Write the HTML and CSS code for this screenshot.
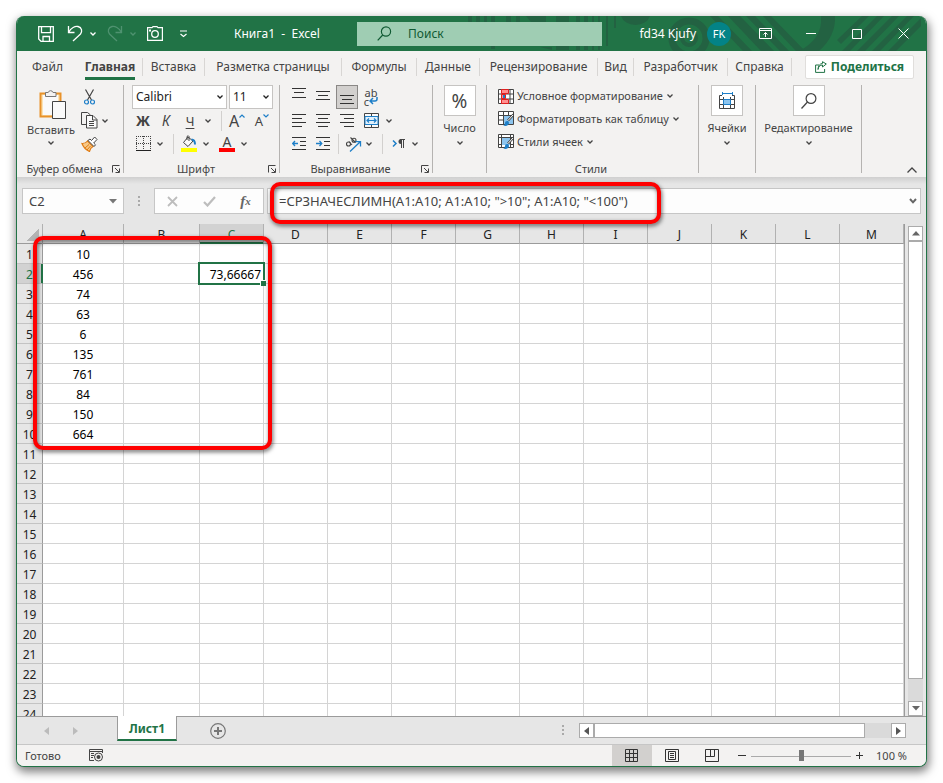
FILE: index.html
```html
<!DOCTYPE html>
<html lang="ru">
<head>
<meta charset="utf-8">
<title>Книга1 - Excel</title>
<link rel="stylesheet" href="styles.css">
</head>
<body>
<svg class="defs" aria-hidden="true">
  <symbol id="chev" viewBox="0 0 8 6"><path d="M1.500 1.500L4 4l2.500-2.500" fill="none" stroke="currentColor" stroke-width="1.300"/></symbol>
  <symbol id="launch" viewBox="0 0 8 8"><path d="M.5 7.500V.5h7M3 3l4 4M7.500 3.500v4h-4" fill="none" stroke="currentColor"/></symbol>
</svg>
<main class="window">
  <header class="titlebar">
    <svg class="pattern" width="460" height="35" viewBox="0 0 460 35" aria-hidden="true">
      <g fill="#236242">
        <path d="M2 0h4v6H2zM10 0h4v6h-4zM18 0h3v6h-3zM25 0h4v33h-4zM40 0h5v6h-5zM50 0h4v6h-4zM60 0h20v6H65zM90 0h13v34H90zM110 0h4v34h-4zM118 0h4v34h-4zM126 0h2v34h-2zM132 0h2v34h-2zM140 0h2v30h-2zM148 0h2v12h-2zM74 31h12v3z"/>
        <path d="M155 0a15 12 0 0 0 29 0zM262 0h12l34 35h-13zM280 0h9l34 35h-9zM297 0h8l34 35h-9zM244 0h8l34 35h-9z"/>
        <path d="M355 0h14q1 20-16 35h-20q24-12 22-35zM396 0h7l-28 28-4-4zM411 0h7l-34 35h-8zM426 0h7l-34 35h-8zM441 0h7l-34 35h-8zM455 2v8l-25 25h-8z"/>
      </g>
      <g fill="none" stroke="#236242"><circle cx="223" cy="22" r="17" stroke-width="7"/><circle cx="223" cy="22" r="7" stroke-width="4"/></g>
    </svg>
    <div class="quick">
      <button class="ic w24" aria-label="Сохранить"><svg width="16" height="16" viewBox="0 0 16 16"><path d="M.7.700h14.600v14.600H3L.7 13zM3.500.7v6h9v-6M5 15v-4.500h6.500V15" fill="none" stroke="#fff" stroke-width="1.300"/></svg></button>
      <button class="ic w24" aria-label="Отменить"><svg width="16" height="17" viewBox="0 0 16 17"><path d="M1.500 1v6.500h6M1.800 7C4 3 8 .8 11 1.500c4 1 4.500 5 2.500 7.500L6 16" fill="none" stroke="#fff" stroke-width="1.300"/></svg></button>
      <button class="ic w12" aria-label="Список отмены"><svg width="8" height="6"><use href="#chev"/></svg></button>
      <button class="ic w24 dim redo" aria-label="Повторить"><svg width="16" height="17" viewBox="0 0 16 17"><path d="M14.500 1v6.500h-6M14.200 7C12 3 8 .8 5 1.500 1 2.500.5 6.500 2.500 9L10 16" fill="none" stroke="currentColor" stroke-width="1.300"/></svg></button>
      <button class="ic w12 dim" aria-label="Список повтора"><svg width="8" height="6"><use href="#chev"/></svg></button>
      <button class="ic w24 camera" aria-label="Камера"><svg width="16" height="15" viewBox="0 0 16 15"><path d="M.6 1.600h4.400L6 .6h4l1 1h4.400v12.700H.6z" fill="none" stroke="#fff" stroke-width="1.200"/><path d="M2 3.500h2v2H2z" fill="#fff"/><circle cx="8" cy="8" r="3.300" fill="none" stroke="#fff" stroke-width="1.300"/></svg></button>
      <button class="ic w32" aria-label="Настройка панели"><svg width="9" height="8" viewBox="0 0 9 8"><path d="M1 1h7M1.500 4l3 2.500 3-2.500" fill="none" stroke="#fff" stroke-width="1.200"/></svg></button>
      <span class="doc">Книга1 &nbsp;- &nbsp;Excel</span>
    </div>
    <label class="search"><svg width="15" height="15" viewBox="0 0 15 15"><circle cx="9" cy="5.500" r="4.600" fill="none" stroke="#105a33" stroke-width="1.200"/><path d="M5.700 9L.7 14.300" stroke="#105a33" stroke-width="1.200"/></svg><input type="text" placeholder="Поиск" aria-label="Поиск"></label>
    <div class="winctl">
      <span class="user">fd34 Kjufy</span><span class="avatar">FK</span>
      <button class="ic" aria-label="Параметры ленты"><svg width="13" height="11" viewBox="0 0 13 11"><path d="M.5.500h12v10H.5zM.5 2.500h12M6.500 9V4.500M4.500 6.500l2-2 2 2" fill="none" stroke="#fff"/></svg></button>
      <button class="ic" aria-label="Свернуть"><svg width="10" height="11"><path d="M0 5.500h10" stroke="#fff"/></svg></button>
      <button class="ic" aria-label="Развернуть"><svg width="10" height="10"><path d="M.5.500h9v9h-9z" fill="none" stroke="#fff"/></svg></button>
      <button class="ic" aria-label="Закрыть"><svg width="11" height="11"><path d="M.5.500l10 10M10.500.500l-10 10" stroke="#fff"/></svg></button>
    </div>
  </header>

  <nav class="tabs">
    <a href="#" class="plain">Файл</a><a href="#" class="active"><span>Главная</span></a><a href="#">Вставка</a><a href="#">Разметка страницы</a><a href="#">Формулы</a><a href="#">Данные</a><a href="#">Рецензирование</a><a href="#">Вид</a><a href="#">Разработчик</a><a href="#">Справка</a>
    <button class="share"><svg width="12" height="12" viewBox="0 0 12 12"><path d="M4 4H.6v7.400h9V8M3 8.500C3.500 5.500 5 4 7.500 4V6L11.300 3 7.500.7v1.700C4.500 2.800 3.200 5 3 8.500z" fill="none" stroke="#217346"/></svg>Поделиться</button>
  </nav>

  <section class="ribbon">
    <div class="group clip">
      <div class="body split">
        <button class="paste"><svg width="32" height="31" viewBox="-4 0 32 31"><path d="M1.500 4.500h20v23h-20z" fill="#fbe3b5" stroke="#e8922a" stroke-width="2"/><path d="M4 6h15v20H4z" fill="#fafafa"/><path d="M6.500 7.500v-4h2.700a2.500 2.500 0 0 1 4.800 0h3v4z" fill="#f3f2f1" stroke="#777"/><path d="M13.500 12.500h13v17h-13z" fill="#fafafa" stroke="#444"/></svg><span>Вставить</span><svg width="8" height="6"><use href="#chev"/></svg></button>
        <div class="rows">
          <div class="row"><button class="ic w20" aria-label="Вырезать"><svg width="11" height="16" viewBox="0 0 11 16"><path d="M1.500.500L7.500 11M9.500.500L3.500 11" stroke="#444" stroke-width="1.200"/><circle cx="2.500" cy="13" r="2" fill="none" stroke="#1e7fc8" stroke-width="1.200"/><circle cx="8.500" cy="13" r="2" fill="none" stroke="#1e7fc8" stroke-width="1.200"/></svg></button></div>
          <div class="row"><button class="ic w20" aria-label="Копировать"><svg width="17" height="17" viewBox="0 0 17 17"><path d="M5.500 12.500h-5V.500h6l3 2.500" fill="none" stroke="#444"/><path d="M5.500 3.500h6.500l4 4v8.500H5.500zM11.500 3.500v4.500h4.500M8 9.500h5M8 11.500h5M8 13.500h5" fill="#fafafa" stroke="#444"/></svg></button><button class="ic w12" aria-label="Ещё"><svg width="8" height="6"><use href="#chev"/></svg></button></div>
          <div class="row"><button class="ic w20" aria-label="Формат по образцу"><svg width="17" height="16" viewBox="0 0 17 16"><path d="M1 7.500c3 .2 4-.5 5.500-2.500l5.500 5.500c-2 1-3 2.500-3.500 5C5 14 2.500 11.500 1 7.500z" fill="#f8c987" stroke="#e07b12" stroke-width="1.200"/><path d="M4 12l4-3.500M6 14l3.500-4" stroke="#e07b12"/><path d="M7 4.500l6 6 1.500-1.700-1.800-1.800L16 3.500 13.700 1 10.500 4.500 9 3z" fill="#fff" stroke="#444"/></svg></button></div>
        </div>
      </div>
      <div class="caption"><span>Буфер обмена</span><button class="ic" aria-label="Параметры буфера"><svg width="8" height="8"><use href="#launch"/></svg></button></div>
    </div>

    <div class="group font">
      <div class="body rows">
        <div class="row"><label class="combo"><input type="text" value="Calibri" aria-label="Шрифт"><svg width="8" height="6"><use href="#chev"/></svg></label><label class="combo size"><input type="text" value="11" aria-label="Размер"><svg width="8" height="6"><use href="#chev"/></svg></label></div>
        <div class="row"><button class="ic w22 bold">Ж</button><button class="ic w24 ital">К</button><button class="ic w24 under">Ч</button><button class="ic w12" aria-label="Подчёркивание"><svg width="8" height="6"><use href="#chev"/></svg></button><i class="sep"></i><button class="ic w30 biga" aria-label="Увеличить шрифт">A<svg width="6" height="4"><path d="M.5 3.500L3 1l2.500 2.500" fill="none" stroke="#1e7fc8" stroke-width="1.200"/></svg></button><button class="ic w20 smalla" aria-label="Уменьшить шрифт">A<svg width="6" height="4"><path d="M.5.500L3 3 5.500.5" fill="none" stroke="#1e7fc8" stroke-width="1.200"/></svg></button></div>
        <div class="row"><button class="ic w22" aria-label="Границы"><svg width="15" height="15" viewBox="0 0 15 15"><path d="M0 .5h15M0 7.500h15M.5 0v13M7.500 0v13M14.500 0v13" stroke="#444" stroke-dasharray="1 1"/><path d="M0 14.500h15" stroke="#222"/></svg></button><button class="ic w12" aria-label="Ещё"><svg width="8" height="6"><use href="#chev"/></svg></button><i class="sep"></i><button class="ic w22 gap" aria-label="Цвет заливки"><svg width="16" height="17" viewBox="0 0 16 17"><path d="M7 2L2.500 7.500l4.500 4 5-5.500zM6 5V1.500q1.500-1.500 2 0V6" fill="#fafafa" stroke="#444"/><path d="M10.500 4.500q3.500 0 3.500 5" fill="none" stroke="#1e7fc8" stroke-width="2"/><path d="M0 13h16v4H0z" fill="#ff0"/></svg></button><button class="ic w12" aria-label="Ещё"><svg width="8" height="6"><use href="#chev"/></svg></button><button class="ic w22 gap fontcolor" aria-label="Цвет текста"><span>A</span></button><button class="ic w12" aria-label="Ещё"><svg width="8" height="6"><use href="#chev"/></svg></button></div>
      </div>
      <div class="caption"><span>Шрифт</span><button class="ic" aria-label="Параметры шрифта"><svg width="8" height="8"><use href="#launch"/></svg></button></div>
    </div>

    <div class="group align">
      <div class="body rows">
        <div class="row"><button class="ic w24" aria-label="По верхнему краю"><svg width="14" height="20"><path d="M0 1.500h14M2 5.500h10M0 10.500h14" stroke="#333"/></svg></button><button class="ic w24" aria-label="По середине"><svg width="14" height="20"><path d="M0 4.500h14M2 8.500h10M0 12.500h14" stroke="#333"/></svg></button><button class="ic w24 pressed" aria-label="По нижнему краю"><svg width="14" height="20"><path d="M0 8.500h14M2 12.500h10M0 16.500h14" stroke="#333"/></svg></button><button class="ic w24 wrap" aria-label="Перенести текст"><span>ab</span><span>c<svg width="9" height="8" viewBox="0 0 9 8"><path d="M8 0v2q0 2-2 2H1M4 1L1 4l3 3" fill="none" stroke="#1e7fc8" stroke-width="1.500"/></svg></span></button></div>
        <div class="row"><button class="ic w24" aria-label="По левому краю"><svg width="14" height="13"><path d="M0 .5h14M0 4.500h10M0 8.500h14M0 12.500h10" stroke="#333"/></svg></button><button class="ic w24" aria-label="По центру"><svg width="14" height="13"><path d="M0 .5h14M2 4.500h10M0 8.500h14M2 12.500h10" stroke="#333"/></svg></button><button class="ic w24" aria-label="По правому краю"><svg width="14" height="13"><path d="M0 .5h14M4 4.500h10M0 8.500h14M4 12.500h10" stroke="#333"/></svg></button><button class="ic w24" aria-label="Объединить"><svg width="15" height="15"><path d="M.5.500h14v14H.5zM7.500 0v3M7.500 12v3" fill="#fafafa" stroke="#444"/><path d="M1 3.500h13v8H1z" fill="#e2f0fb" stroke="#1e7fc8"/><path d="M3 7.500h9M5 5.500l-2 2 2 2M10 5.500l2 2-2 2" fill="none" stroke="#1e7fc8" stroke-width="1.200"/></svg></button><button class="ic w12" aria-label="Ещё"><svg width="8" height="6"><use href="#chev"/></svg></button></div>
        <div class="row"><button class="ic w24" aria-label="Уменьшить отступ"><svg width="14" height="13"><path d="M0 .5h14M8 4.500h6M8 8.500h6M0 12.500h14" stroke="#333"/><path d="M6 6.500H1M3 4L.7 6.500 3 9" fill="none" stroke="#1e7fc8" stroke-width="1.300"/></svg></button><button class="ic w24" aria-label="Увеличить отступ"><svg width="14" height="13"><path d="M0 .5h14M8 4.500h6M8 8.500h6M0 12.500h14" stroke="#333"/><path d="M0 6.500h5M3.500 4l2.300 2.500L3.500 9" fill="none" stroke="#1e7fc8" stroke-width="1.300"/></svg></button><i class="sep near"></i><button class="ic w20 gap" aria-label="Ориентация"><svg width="17" height="16" viewBox="0 0 17 16"><g fill="none" stroke="#444" stroke-width="1.100"><circle cx="3.500" cy="8" r="2"/><path d="M4 5.500l3 3.500M5.500 1.500l5 5"/><circle cx="9" cy="4.200" r="2"/></g><path d="M5 15.500L15 6M10.500 5.700H15.500V10.500" fill="none" stroke="#1e7fc8" stroke-width="1.300"/></svg></button><button class="ic w12" aria-label="Ещё"><svg width="8" height="6"><use href="#chev"/></svg></button><i class="sep"></i><button class="ic w22 gap" aria-label="Направление текста"><svg width="13" height="10" viewBox="0 0 13 10"><path d="M1 1.500l3 3-3 3" fill="none" stroke="#1e7fc8" stroke-width="1.500"/><path d="M9 0a2.500 2.500 0 0 0 0 5z" fill="#444"/><path d="M8 .5h5M9.500 0v9M11.500 0v9" stroke="#444"/></svg></button><button class="ic w12" aria-label="Ещё"><svg width="8" height="6"><use href="#chev"/></svg></button></div>
      </div>
      <div class="caption"><span>Выравнивание</span><button class="ic" aria-label="Параметры выравнивания"><svg width="8" height="8"><use href="#launch"/></svg></button></div>
    </div>

    <div class="group number"><button class="tall"><span class="tile">%</span><span>Число</span><svg width="8" height="6"><use href="#chev"/></svg></button></div>

    <div class="group styles">
      <div class="body rows">
        <button class="row item"><svg width="16" height="15" viewBox="0 0 16 15"><path d="M.5.500h15v14H.5zM.5 5h15M.5 10h15M4 .5v14M12 .5v14" fill="#fff" stroke="#444"/><path d="M3.500.500h7v4h-7zM3.500 5.500h4v4h-4zM3.500 10.500h7v4h-7z" fill="#ff8f8f" stroke="#e02020"/><path d="M5 6h2v3H5z" fill="#1e7fc8"/></svg><span>Условное форматирование</span><svg width="8" height="6"><use href="#chev"/></svg></button>
        <button class="row item"><svg width="16" height="15" viewBox="0 0 16 15"><path d="M.5.500h15v13H.5zM.5 4.500h15M.5 9h15M5.500.5v13M10.500.5v13" fill="#fff" stroke="#444"/><path d="M6 5h9v8H6z" fill="#8cc4ee"/><path d="M15.500 3.500L10 9.500" stroke="#444" stroke-width="2.500"/><path d="M15 4L10 9.500" stroke="#fff"/><path d="M5 14.500q2 0 2-2.500t3-2q2 2 0 4-2 1.500-5 .5z" fill="#1e7fc8"/></svg><span>Форматировать как таблицу</span><svg width="8" height="6"><use href="#chev"/></svg></button>
        <button class="row item"><svg width="16" height="15" viewBox="0 0 16 15"><path d="M.5.500h15v13H.5zM.5 3.500h15M.5 10.500h15M3.500.5v13M12.500.5v13" fill="#fff" stroke="#444"/><path d="M4 4h8v7H4z" fill="#8cc4ee"/><path d="M15.500 3.500L10 9.500" stroke="#444" stroke-width="2.500"/><path d="M15 4L10 9.500" stroke="#fff"/><path d="M5 14.500q2 0 2-2.500t3-2q2 2 0 4-2 1.500-5 .5z" fill="#1e7fc8"/></svg><span>Стили ячеек</span><svg width="8" height="6"><use href="#chev"/></svg></button>
      </div>
      <div class="caption"><span>Стили</span></div>
    </div>

    <div class="group cells"><button class="tall"><span class="tile"><svg width="17" height="17" viewBox="0 0 17 17"><path d="M4 1.500h9M3.500 0v3M13.500 0v3" stroke="#1e7fc8"/><path d="M3 3.500H.5v13h15V3.500H13M.5 7.500h15M.5 12.500h15M4.500 5v11M11.500 5v11" fill="none" stroke="#444"/><path d="M4.500 7.500h7v5h-7z" fill="#8cc4ee" stroke="#1e7fc8"/></svg></span><span>Ячейки</span><svg width="8" height="6"><use href="#chev"/></svg></button></div>
    <div class="group edit"><button class="tall"><span class="tile"><svg width="16" height="16" viewBox="0 0 16 16"><circle cx="10" cy="5.500" r="4.900" fill="none" stroke="#444" stroke-width="1.200"/><path d="M6.500 9L.5 15.500" stroke="#444" stroke-width="1.300"/></svg></span><span>Редактирование</span><svg width="8" height="6"><use href="#chev"/></svg></button></div>
    <button class="ic collapse" aria-label="Свернуть ленту"><svg width="10" height="6"><path d="M.5 5.500L5 1l4.500 4.500" fill="none" stroke="#444" stroke-width="1.300"/></svg></button>
  </section>

  <section class="formulabar">
    <label class="namebox"><input type="text" value="C2" aria-label="Имя"><svg width="8" height="5"><path d="M0 0h8L4 4.500z" fill="#777"/></svg></label>
    <svg class="grip" width="2" height="11"><path d="M0 0h2v2H0zM0 4h2v2H0zM0 8h2v2H0z" fill="#aaa"/></svg>
    <div class="fx"><button class="ic" aria-label="Отмена"><svg width="11" height="11"><path d="M1 1l9 9M10 1l-9 9" stroke="#bdbdbd" stroke-width="1.800"/></svg></button><button class="ic" aria-label="Ввод"><svg width="13" height="11"><path d="M1 6l3.500 3.500L12 1" fill="none" stroke="#bdbdbd" stroke-width="2.200"/></svg></button><button class="ic fn">f<small>x</small></button></div>
    <label class="formula"><input type="text" value="=СРЗНАЧЕСЛИМН(A1:A10; A1:A10; &quot;&gt;10&quot;; A1:A10; &quot;&lt;100&quot;)" aria-label="Формула"><svg width="8" height="6" viewBox="0 0 8 6"><path d="M1 1l3 3.300L7 1" fill="none" stroke="#666" stroke-width="2"/></svg></label>
    <i class="mark mark-formula"></i>
  </section>

  <section class="sheet">
    <div class="gridwrap">
      <table>
        <colgroup><col class="cn"><col class="ca"><col class="cb"><col class="cc"><col><col><col><col><col><col><col><col><col><col></colgroup>
        <thead><tr><th class="corner"></th><th>A</th><th>B</th><th class="sel">C</th><th>D</th><th>E</th><th>F</th><th>G</th><th>H</th><th>I</th><th>J</th><th>K</th><th>L</th><th>M</th></tr></thead>
        <tbody id="cells"></tbody>
      </table>
    </div>
    <div class="vscroll"><button class="ic arrow" aria-label="Вверх"><svg width="8" height="5"><path d="M0 4.500L4 0l4 4.500z" fill="#666"/></svg></button><div class="thumb"></div><div class="track"></div><button class="ic arrow" aria-label="Вниз"><svg width="8" height="5"><path d="M0 0h8L4 4.500z" fill="#666"/></svg></button></div>
    <i class="mark mark-cells"></i>
  </section>

  <section class="sheetbar">
    <button class="ic nav" aria-label="Предыдущий лист"><svg width="5" height="8"><path d="M5 0v8L0 4z" fill="#bbb"/></svg></button><button class="ic nav" aria-label="Следующий лист"><svg width="5" height="8"><path d="M0 0v8l5-4z" fill="#bbb"/></svg></button>
    <a href="#" class="sheettab">Лист1</a>
    <button class="ic add" aria-label="Новый лист"><svg width="16" height="16"><circle cx="8" cy="8" r="7.300" fill="none" stroke="#777" stroke-width="1.200"/><path d="M4 8h8M8 4v8" stroke="#777" stroke-width="2"/></svg></button>
    <svg class="grip" width="2" height="11"><path d="M0 0h2v2H0zM0 4h2v2H0zM0 8h2v2H0z" fill="#aaa"/></svg>
    <div class="hscroll"><button class="ic arrow" aria-label="Влево"><svg width="5" height="8"><path d="M5 0v8L0 4z" fill="#555"/></svg></button><div class="thumb"></div><div class="track"></div><button class="ic arrow" aria-label="Вправо"><svg width="5" height="8"><path d="M0 0v8l5-4z" fill="#555"/></svg></button></div>
  </section>

  <footer class="status">
    <span>Готово</span>
    <button class="ic macro" aria-label="Запись макроса"><svg width="15" height="13" viewBox="0 0 15 13"><path d="M5 11.500H.5V.500h13V4M0 2.500h14M2 4.500h3M2 6.500h3M2 8.500h2" fill="none" stroke="#444"/><circle cx="9.500" cy="8" r="4" fill="#f3f2f1" stroke="#444"/><circle cx="9.500" cy="8" r="2" fill="#444"/></svg></button>
    <div class="views">
      <button class="ic on" aria-label="Обычный"><svg width="14" height="14"><path d="M.5.500h12v12H.5zM.5 4.500h12M.5 8.500h12M4.500.5v12M8.500.5v12" fill="none" stroke="#333"/></svg></button><button class="ic" aria-label="Разметка"><svg width="14" height="14"><path d="M.5.500h13v12H.5zM3.500 2.500h7v8h-7zM5 4.500h4M5 6.500h4M5 8.500h4" fill="none" stroke="#333"/></svg></button><button class="ic" aria-label="Страничный"><svg width="14" height="14"><path d="M.5.500h13v12H.5zM.5 7.500h9V.500M5.500.500v7" fill="none" stroke="#333"/></svg></button>
    </div>
    <button class="ic zoomb" aria-label="Уменьшить"><svg width="8" height="8"><path d="M0 3.500h8" stroke="#333"/></svg></button>
    <input class="zoom" type="range" min="0" max="100" value="50" aria-label="Масштаб">
    <button class="ic zoomb" aria-label="Увеличить"><svg width="8" height="8"><path d="M0 3.500h7M3.500 0v7" stroke="#333"/></svg></button>
    <span class="pct">100 %</span>
  </footer>
</main>
<script src="grid.js"></script>
</body>
</html>
```
FILE: grid.js
```js
const values = ["10", "456", "74", "63", "6", "135", "761", "84", "150", "664"];
const body = document.getElementById("cells");

for (let r = 1; r <= 24; r++) {
  const row = document.createElement("tr");
  const head = document.createElement("th");
  head.textContent = r;
  if (r === 2) head.className = "sel";
  row.append(head);
  for (let c = 0; c < 13; c++) {
    const cell = document.createElement("td");
    if (c === 0 && values[r - 1]) cell.textContent = values[r - 1];
    if (r === 2 && c === 2) {
      cell.textContent = "73,66667";
      cell.className = "current";
    }
    row.append(cell);
  }
  body.append(row);
}
```
FILE: styles.css
```css
* { box-sizing: border-box; }
body {
  margin: 0;
  padding: 16px;
  height: 100vh;
  background: #fff;
  color: #444;
  font: 12px/16px "Noto Sans", sans-serif;
  overflow: hidden;
}
button, input { font: inherit; color: inherit; background: none; border: 0; padding: 0; margin: 0; outline: 0; min-width: 0; }
a { color: inherit; text-decoration: none; }
svg { display: block; flex: none; }
.defs { position: absolute; width: 0; height: 0; }

.window {
  display: flex;
  flex-direction: column;
  height: 100%;
  border: 1px solid #217346;
  border-top: 0;
  border-radius: 8px;
  overflow: hidden;
  background: #e6e6e6;
  box-shadow: 1px 4px 10px 1px rgba(0, 0, 0, .5);
}

.ic { display: flex; align-items: center; justify-content: center; flex: none; }
.w12 { width: 12px; }
.w20 { width: 20px; }
.w22 { width: 22px; }
.w24 { width: 24px; }
.w30 { width: 30px; }
.w32 { width: 32px; }

/* title bar */
.titlebar {
  position: relative;
  display: grid;
  grid-template-columns: 340px minmax(0, 245px) 1fr;
  align-items: center;
  height: 35px;
  flex: none;
  background: #217346;
  color: #fff;
}
.pattern { position: absolute; right: 0; top: 0; }
.quick { display: flex; align-items: center; padding-left: 17px; }
.quick .w24:nth-child(2) { margin-left: 5px; }
.quick .redo { margin-left: 4px; }
.quick .camera { margin-left: 4px; }
.doc { margin-left: 35px; white-space: nowrap; }
.dim { color: #4f9270; }
.search {
  position: relative;
  display: flex;
  align-items: center;
  gap: 16px;
  height: 24px;
  padding-left: 20px;
  background: #9fcdb3;
}
.search input { flex: 1; }
.search input::placeholder { color: #105a33; opacity: 1; }
.winctl { position: relative; display: flex; align-items: center; justify-content: flex-end; }
.winctl .ic { width: 46px; height: 34px; }
.avatar {
  width: 24px;
  height: 24px;
  margin: 0 11px;
  border-radius: 50%;
  background: #038387;
  font-size: 11px;
  line-height: 24px;
  text-align: center;
}

/* ribbon tabs */
.tabs {
  display: grid;
  grid-template-columns: 61px 65px 62px 137px 75px 63px 118px 36px 94px 64px 1fr;
  align-items: center;
  height: 31px;
  flex: none;
  background: #f3f2f1;
}
.tabs a { height: 18px; border-right: 1px solid #d8d6d4; text-align: center; line-height: 18px; white-space: nowrap; }
.tabs .plain { border: 0; }
.tabs .active { font-weight: 700; }
.active span { display: inline-block; height: 22px; border-bottom: 3px solid #217346; }
.share {
  display: flex;
  align-items: center;
  justify-content: center;
  gap: 4px;
  justify-self: end;
  width: 109px;
  height: 24px;
  margin-right: 12px;
  border: 1px solid #e0dedc;
  border-radius: 2px;
  background: #fff;
  color: #217346;
  font-weight: 700;
}

/* ribbon */
.ribbon { display: flex; flex: none; height: 95px; padding-top: 3px; background: #f3f2f1; font-size: 11px; }
.group { display: flex; flex-direction: column; height: 88px; border-right: 1px solid #b5b3b1; flex: none; }
.clip { width: 107px; }
.font { width: 156px; }
.align { width: 153px; }
.number { width: 54px; }
.styles { width: 212px; }
.cells { width: 57px; }
.edit { width: 106px; }
.body { height: 70px; flex: none; }
.split { display: flex; padding-left: 8px; }
.rows { display: flex; flex-direction: column; }
.row { display: flex; align-items: center; height: 23px; }
.font .rows { padding-left: 8px; }
.align .rows { padding-left: 7px; }
.row:first-child { height: 24px; }
.paste { display: flex; flex-direction: column; align-items: center; width: 52px; padding-top: 4px; line-height: 20px; }
.caption { display: flex; align-items: center; flex: none; margin-top: 9px; height: 10px; line-height: 10px; padding-right: 3px; }
.caption span { flex: 1; text-align: center; white-space: nowrap; }
.clip .split .rows { padding-left: 2px; }
.combo { display: flex; align-items: center; width: 95px; height: 24px; padding: 0 2px 0 3px; border: 1px solid #c6c4c2; background: #fff; color: #222; font-size: 12px; }
.combo input { flex: 1; }
.combo.size { width: 44px; margin-left: 2px; }
.sep { width: 1px; height: 20px; margin-left: 7px; background: #d2d0ce; }
.sep.near { margin-left: 3px; }
.gap { margin-left: 4px; }
.bold { font-weight: 700; font-size: 14px; }
.ital { font-style: italic; font-size: 14px; }
.under { text-decoration: underline; text-underline-offset: 2px; font-size: 13px; }
.biga { font-size: 16px; align-items: flex-start; }
.smalla { font-size: 13px; align-items: flex-start; }
.biga svg, .smalla svg { margin-top: 1px; }
.fontcolor span { width: 16px; height: 17px; border-bottom: 4px solid #f00; font-size: 14px; line-height: 13px; }
.pressed { width: 22px; height: 24px; margin: 0 1px; border: 1px solid #8a8886; background: #d2d0ce; }
.wrap { flex-direction: column; font-size: 11px; line-height: 9px; }
.wrap span { display: flex; }
.tall { display: flex; flex-direction: column; align-items: center; line-height: 24px; }
.tile { display: flex; align-items: center; justify-content: center; width: 32px; height: 31px; border: 1px solid #c6c4c2; background: #fff; font-size: 19px; }
.item { gap: 3px; padding-left: 11px; white-space: nowrap; }
.item:first-child { height: 22px; }
.collapse { margin-left: auto; margin-right: 9px; align-self: flex-end; height: 14px; }

/* formula bar */
.formulabar {
  position: relative;
  display: flex;
  align-items: center;
  flex: none;
  height: 47px;
  padding: 1px 5px 0;
  background: linear-gradient(#cfcfcf, #e6e6e6 7px);
  font-size: 13px;
}
.namebox, .fx, .formula { display: flex; align-items: center; height: 26px; border: 1px solid #c6c6c6; background: #fdfdfd; }
.namebox { width: 102px; padding: 0 6px; }
.namebox input, .formula input { flex: 1; }
.formulabar .grip { margin: 0 14px; }
.fx { width: 110px; justify-content: space-around; }
.fn { font: italic 700 15px/16px "Liberation Serif", serif; color: #666; }
.fn small { font-size: 11px; }
.formula { flex: 1; margin-left: 3px; padding: 0 3px 0 11px; }

/* highlight frames drawn over the page */
.mark { position: absolute; z-index: 2; border: 4px solid #f00; border-radius: 10px; filter: drop-shadow(1px 2px 2px rgba(0, 0, 0, .6)); pointer-events: none; }
.mark-formula { left: 253px; top: 5px; width: 391px; height: 42px; }
.mark-cells { left: 16px; top: 12px; width: 239px; height: 214px; }

/* worksheet */
.sheet { position: relative; display: flex; flex: 1; min-height: 0; }
.gridwrap { flex: 1; overflow: hidden; border-right: 1px solid #9b9b9b; }
table { width: 100%; table-layout: fixed; border-collapse: separate; border-spacing: 0; color: #000; }
.cn { width: 26px; }
.ca { width: 81px; }
.cb { width: 76px; }
.cc { width: 64px; }
th, td { height: 20px; padding: 2px 0 0; font-weight: 400; line-height: 17px; text-align: center; border-right: 1px solid #d4d4d4; border-bottom: 1px solid #d4d4d4; white-space: nowrap; }
td { background: #fff; }
th { background: #e6e6e6; color: #222; border-bottom-color: #c3c3c3; }
thead th { border-bottom-color: #9b9b9b; border-right-color: #b1b1b1; }
tbody th { border-right-color: #9b9b9b; }
th.sel { background: #d2d2d2; color: #217346; }
thead th.sel { border-bottom-color: #217346; box-shadow: inset 0 -1px #217346; }
tbody th.sel { border-right-color: #217346; box-shadow: inset -1px 0 #217346; }
.corner { background: linear-gradient(135deg, transparent 50%, #b4b4b4 50%) 10px 5px / 12px 12px no-repeat #e6e6e6; }
.current { position: relative; padding-right: 2px; text-align: right; }
.current::before { content: ""; position: absolute; inset: -2px; border: 2px solid #217346; }
.current::after { content: ""; position: absolute; right: -3px; bottom: -3px; width: 5px; height: 5px; background: #217346; box-shadow: -1px -1px #fff; }
.vscroll { display: flex; flex-direction: column; width: 15px; margin: 2px 3px 0; }
.arrow { width: 15px; height: 15px; border: 1px solid #ababab; background: #fff; }
.thumb { border: 1px solid #ababab; background: #fff; }
.track { background: #dadada; }
.vscroll .thumb { flex: 20; }
.vscroll .track { flex: 1; }

/* sheet tabs */
.sheetbar { display: flex; align-items: center; flex: none; height: 28px; border-top: 1px solid #9b9b9b; }
.nav { width: 29px; height: 20px; }
.nav:first-child { margin-left: 15px; }
.sheettab { align-self: flex-start; width: 60px; height: 25px; margin: -1px 0 0 27px; border: solid #9b9b9b; border-width: 0 1px; border-bottom: 2px solid #217346; background: #fff; color: #217346; font-weight: 700; line-height: 26px; text-align: center; }
.add { margin-left: 33px; }
.sheetbar .grip { margin-left: auto; margin-right: 15px; }
.hscroll { display: flex; width: 36%; height: 15px; margin-right: 20px; }
.hscroll .thumb { flex: 271; }
.hscroll .track { flex: 26; }

/* status bar */
.status { display: flex; align-items: center; flex: none; height: 22px; padding-left: 8px; border-top: 1px solid #c6c6c6; background: #f3f2f1; font-size: 11px; line-height: 14px; }
.macro { margin-left: 28px; }
.views { display: flex; align-self: stretch; margin-left: auto; }
.views .ic { width: 40px; }
.views .on { background: #d2d0ce; }
.zoomb { width: 10px; }
.views + .zoomb { margin-left: 5px; }
.zoom { appearance: none; width: 100px; height: 12px; margin: 0 4px; background: linear-gradient(#aaa, #aaa) 0 6px / 100% 1px no-repeat; }
.zoom::-webkit-slider-thumb { appearance: none; width: 5px; height: 11px; background: #777; }
.pct { width: 53px; margin-right: 8px; text-align: center; }
```
